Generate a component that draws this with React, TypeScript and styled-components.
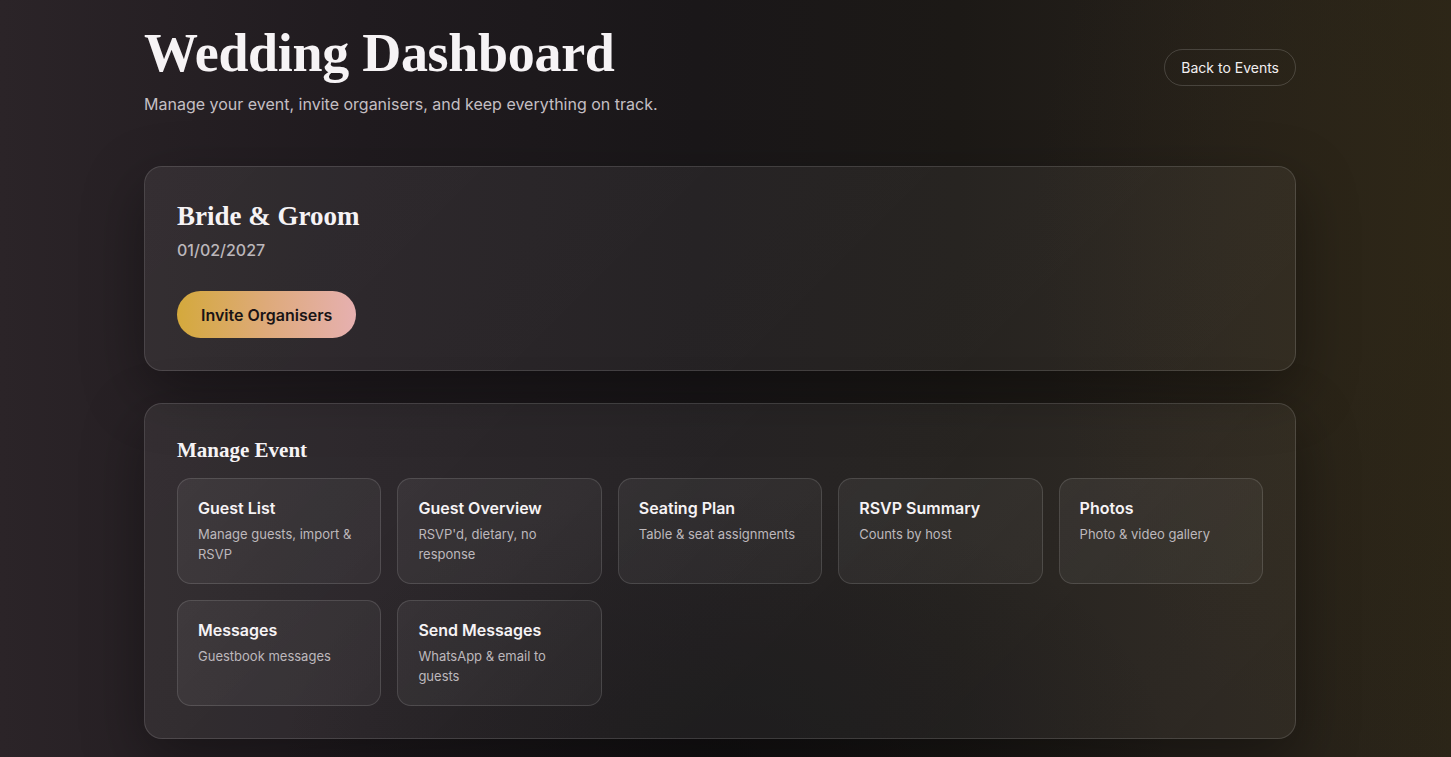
import React from "react";
import styled, { createGlobalStyle } from "styled-components";

const Global = createGlobalStyle`
  * { box-sizing: border-box; }
  html, body { margin: 0; padding: 0; }
  body {
    min-height: 757px;
    font-family: Inter, "Noto Sans", sans-serif;
    color: #f4f1f3;
    background:
      radial-gradient(ellipse 600px 360px at 50% 100%, rgba(12,11,12,0.55), transparent 75%),
      radial-gradient(ellipse 520px 700px at 100% 30%, rgba(48,40,22,0.55), transparent 80%),
      linear-gradient(90deg, #2b2428 0%, #201b1f 25%, #1a1719 48%, #1c1916 66%, #25201a 84%, #2b2518 100%);
  }
`;

const Page = styled.div`
  width: 1152px;
  margin: 0 0 0 144px;
  padding: 22px 0 18px;
  display: flex;
  flex-direction: column;
  gap: 32px;
`;

const Header = styled.header`
  display: flex;
  justify-content: space-between;
  align-items: flex-start;
  padding-bottom: 18px;
`;

const TitleBlock = styled.div`
  display: flex;
  flex-direction: column;
  gap: 8px;
`;

const Title = styled.h1`
  margin: 0;
  font-family: "Liberation Serif", "Times New Roman", serif;
  font-weight: 700;
  font-size: 54px;
  line-height: 62px;
  letter-spacing: -0.3px;
  color: #f6f3f5;
`;

const Subtitle = styled.p`
  margin: 0;
  font-size: 16px;
  line-height: 24px;
  color: #c4bfc3;
`;

const GhostButton = styled.button`
  margin-top: 27px;
  height: 37px;
  padding: 0 16px;
  border-radius: 999px;
  border: 1px solid rgba(255, 255, 255, 0.16);
  background: transparent;
  color: #f2eff1;
  font-family: Inter, sans-serif;
  font-size: 14px;
`;

const Card = styled.section`
  border-radius: 18px;
  border: 1px solid rgba(255, 255, 255, 0.13);
  background: linear-gradient(135deg, rgba(255,255,255,0.065), rgba(255,255,255,0.045));
  box-shadow: 0 20px 60px rgba(0, 0, 0, 0.35);
  padding: 32px;
`;

const EventName = styled.h2`
  margin: 0;
  font-family: "Liberation Serif", "Times New Roman", serif;
  font-weight: 700;
  font-size: 27px;
  line-height: 34px;
  color: #f6f3f5;
`;

const EventDate = styled.div`
  margin-top: 5px;
  font-size: 16px;
  line-height: 24px;
  font-weight: 500;
  color: #bcb7bb;
`;

const PrimaryButton = styled.button`
  margin-top: 29px;
  height: 47px;
  padding: 0 24px;
  border: none;
  border-radius: 999px;
  background: linear-gradient(90deg, #d4a93c 0%, #deaa7a 50%, #e6b0b0 100%);
  color: #1a1416;
  font-family: Inter, sans-serif;
  font-size: 16px;
  font-weight: 600;
`;

const SectionTitle = styled.h3`
  margin: 0 0 14px;
  font-family: "Liberation Serif", "Times New Roman", serif;
  font-weight: 700;
  font-size: 21px;
  line-height: 28px;
  color: #f6f3f5;
`;

const Grid = styled.div`
  display: grid;
  grid-template-columns: repeat(5, 1fr);
  gap: 16px;
`;

const Tile = styled.div`
  min-height: 106px;
  border-radius: 14px;
  border: 1px solid rgba(255, 255, 255, 0.13);
  background: linear-gradient(135deg, rgba(255,255,255,0.06), rgba(255,255,255,0.04));
  padding: 19px 20px;
`;

const TileTitle = styled.div`
  font-size: 16px;
  line-height: 20px;
  font-weight: 600;
  color: #f6f3f5;
`;

const TileDesc = styled.div`
  margin-top: 6px;
  font-size: 13px;
  line-height: 20px;
  color: #bdb8bc;
`;

const tiles = [
  ["Guest List", "Manage guests, import & RSVP"],
  ["Guest Overview", "RSVP'd, dietary, no response"],
  ["Seating Plan", "Table & seat assignments"],
  ["RSVP Summary", "Counts by host"],
  ["Photos", "Photo & video gallery"],
  ["Messages", "Guestbook messages"],
  ["Send Messages", "WhatsApp & email to guests"],
];

export default function App() {
  return (
    <>
      <Global />
      <Page>
        <Header>
          <TitleBlock>
            <Title>Wedding Dashboard</Title>
            <Subtitle>Manage your event, invite organisers, and keep everything on track.</Subtitle>
          </TitleBlock>
          <GhostButton>Back to Events</GhostButton>
        </Header>
        <Card>
          <EventName>Bride &amp; Groom</EventName>
          <EventDate>01/02/2027</EventDate>
          <PrimaryButton>Invite Organisers</PrimaryButton>
        </Card>
        <Card>
          <SectionTitle>Manage Event</SectionTitle>
          <Grid>
            {tiles.map(([t, d]) => (
              <Tile key={t}>
                <TileTitle>{t}</TileTitle>
                <TileDesc>{d}</TileDesc>
              </Tile>
            ))}
          </Grid>
        </Card>
      </Page>
    </>
  );
}
